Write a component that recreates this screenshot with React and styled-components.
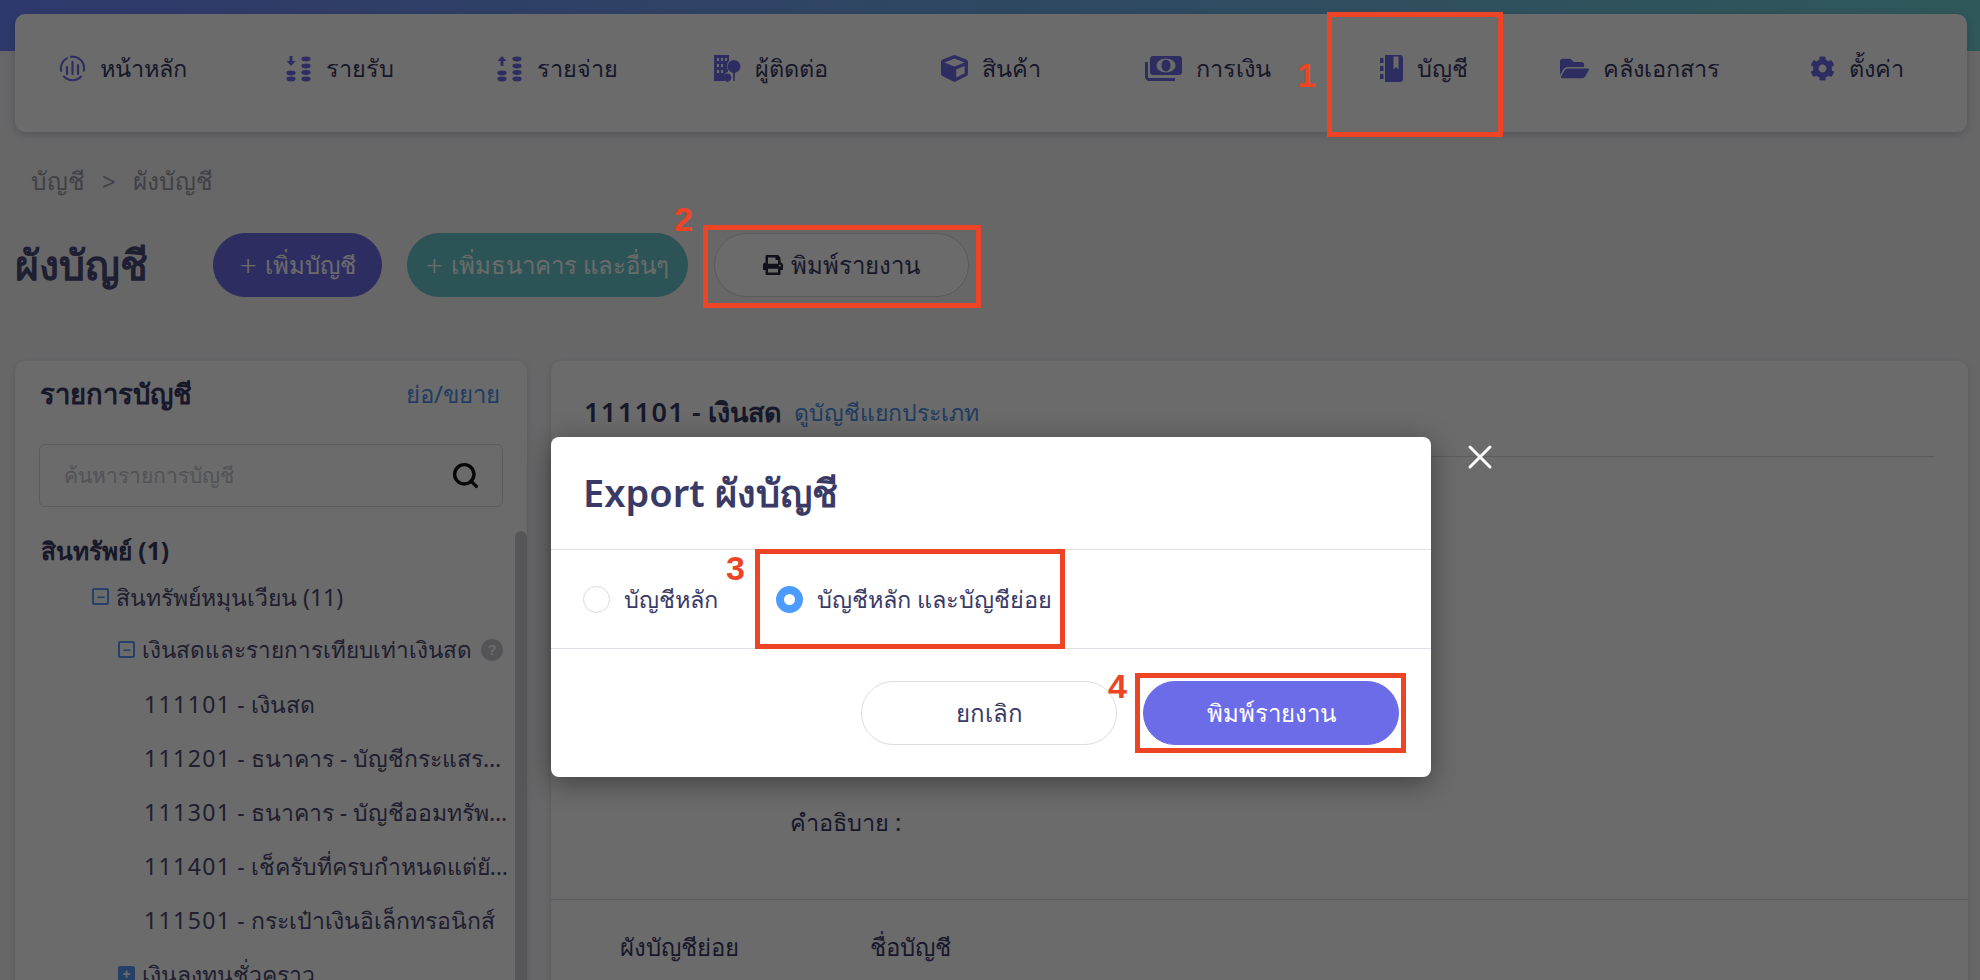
import React from 'react';
import styled, { createGlobalStyle } from 'styled-components';
import { FaCube, FaFolderOpen, FaCog, FaPrint } from 'react-icons/fa';
import { Search, X } from 'lucide-react';

const GlobalStyle = createGlobalStyle`
  html, body {
    margin: 0;
    height: 100%;
    overflow: hidden;
    background: #f5f5f8;
    color: #3a3a66;
    font-family: "Noto Sans", "Open Sans", "Liberation Sans", sans-serif;
  }
  * { box-sizing: border-box; }
`;

const Page = styled.div`
  position: relative;
  width: 1980px;
  height: 980px;
  overflow: hidden;
`;

const Header = styled.header`
  padding: 14px 13px 0 15px;
  background: linear-gradient(90deg, #7186ff, #70d2d6) no-repeat;
  background-size: 100% 51px;
`;

const Nav = styled.nav`
  display: grid;
  grid-template-columns: 227px 211px 217px 227px 204px 235px 180px 250px 1fr;
  height: 118px;
  padding: 42px 0 0 44px;
  background: #fff;
  border-radius: 10px;
  box-shadow: 0 2px 8px rgba(60, 60, 100, 0.25);
`;

const NavItem = styled.a`
  display: flex;
  align-items: center;
  gap: 14px;
  height: 25px;
  font-size: 23.5px;
  color: #3a3a66;
  white-space: nowrap;
  svg { flex: none; color: #6c6ce8; }
`;

const Main = styled.main`
  padding: 0 12px 0 15px;
`;

const Crumbs = styled.div`
  display: flex;
  gap: 17px;
  align-items: center;
  height: 30px;
  margin: 34px 0 0 16px;
  font-size: 24.5px;
  color: #9a9aa8;
`;

const TitleRow = styled.div`
  display: flex;
  align-items: center;
  height: 64px;
  margin-top: 37px;
`;

const PageTitle = styled.h1`
  width: 198px;
  margin: 0;
  font-size: 41px;
  font-weight: 700;
  color: #4a4a7a;
  white-space: nowrap;
`;

const HeadButton = styled.button`
  display: flex;
  align-items: center;
  justify-content: center;
  gap: 8px;
  width: ${(p) => p.$width}px;
  height: 64px;
  margin-right: ${(p) => p.$gap}px;
  border: 1px solid ${(p) => (p.$bg ? p.$bg : '#d5d5e2')};
  border-radius: 32px;
  background: ${(p) => p.$bg || '#fff'};
  color: ${(p) => (p.$bg ? '#fff' : '#3a3a66')};
  font: inherit;
  font-size: 24px;
  white-space: nowrap;
`;

const Plus = styled.span`
  font-size: 30px;
  font-weight: 300;
  line-height: 1;
`;

const Columns = styled.div`
  display: grid;
  grid-template-columns: 512px 1fr;
  gap: 24px;
  margin-top: 64px;
`;

const Panel = styled.section`
  height: 640px;
  overflow: hidden;
  background: #fff;
  border-radius: 10px;
  box-shadow: 0 1px 6px rgba(60, 60, 100, 0.15);
`;

const SideHead = styled.div`
  display: flex;
  justify-content: space-between;
  align-items: center;
  height: 66px;
  padding: 0 27px 0 25px;
`;

const SideTitle = styled.h2`
  margin: 0;
  font-size: 27.5px;
  font-weight: 700;
  color: #3a3a66;
`;

const BlueLink = styled.a`
  font-size: ${(p) => p.$size}px;
  color: #4c8fe8;
  white-space: nowrap;
`;

const SearchBox = styled.div`
  display: flex;
  align-items: center;
  justify-content: space-between;
  height: 63px;
  margin: 17px 24px 0;
  padding: 0 22px 0 24px;
  border: 1px solid #d8d8e4;
  border-radius: 6px;
  font-size: 21px;
  color: #c4c4cf;
  svg { color: #111; }
`;

const TreeWrap = styled.div`
  display: flex;
  margin-top: 24px;
`;

const Tree = styled.div`
  flex: 1;
  min-width: 0;
  padding: 0 4px 0 26px;
`;

const ScrollThumb = styled.div`
  flex: none;
  width: 12px;
  height: 480px;
  background: #cfcfd6;
  border-radius: 6px 6px 0 0;
`;

const GroupTitle = styled.div`
  height: 40px;
  line-height: 40px;
  font-size: 24.5px;
  font-weight: 700;
  color: #3a3a66;
`;

const TreeRow = styled.div`
  display: flex;
  align-items: center;
  gap: 7px;
  height: ${(p) => p.$h || 54}px;
  padding-left: ${(p) => p.$indent}px;
  font-size: ${(p) => p.$size || 23}px;
  line-height: 40px;
  color: #4a4a72;
  white-space: nowrap;
`;

const RowText = styled.span`
  min-width: 0;
  overflow: hidden;
  text-overflow: ellipsis;
`;

const Code = styled.span`
  letter-spacing: 1.4px;
`;

const Toggle = styled.span`
  display: flex;
  flex: none;
  align-items: center;
  justify-content: center;
  width: 17px;
  height: 17px;
  border: 2px solid #5a9cf5;
  border-radius: 2px;
  background: ${(p) => (p.$filled ? '#5a9cf5' : 'transparent')};
  color: ${(p) => (p.$filled ? '#fff' : '#5a9cf5')};
  font: 700 14px/1 "Liberation Sans", sans-serif;
`;

const Help = styled.span`
  flex: none;
  width: 22px;
  height: 22px;
  margin: 0 8px 0 auto;
  border-radius: 50%;
  background: #c9c9d0;
  color: #fff;
  text-align: center;
  font: 700 15px/22px "Liberation Sans", sans-serif;
`;

const DetailHead = styled.div`
  display: flex;
  align-items: center;
  gap: 12px;
  height: 96px;
  margin: 0 33px;
  padding-top: 8px;
  border-bottom: 1px solid #d8d8e4;
`;

const DetailName = styled.span`
  font-size: 27px;
  font-weight: 600;
  color: #3a3a66;
`;

const Description = styled.div`
  height: 443px;
  padding: 350px 0 0 239px;
  border-bottom: 1px solid #d8d8e4;
  font-size: 23.5px;
  line-height: 30px;
  color: #3a3a66;
`;

const TableHead = styled.div`
  display: grid;
  grid-template-columns: 250px 1fr;
  padding: 32px 0 0 69px;
  font-size: 24px;
  line-height: 30px;
  color: #3a3a66;
`;

const Overlay = styled.div`
  position: absolute;
  inset: 0;
  background: rgba(0, 0, 0, 0.58);
`;

const Modal = styled.div`
  position: absolute;
  left: 551px;
  top: 437px;
  width: 880px;
  height: 340px;
  background: #fff;
  border-radius: 8px;
  box-shadow: 0 6px 28px rgba(0, 0, 0, 0.4);
`;

const CloseButton = styled.span`
  position: absolute;
  left: 909px;
  top: 0;
  display: flex;
  color: #fff;
`;

const ModalTitle = styled.h3`
  display: flex;
  align-items: center;
  height: 112px;
  margin: 0;
  padding-left: 32px;
  font-size: 38px;
  font-weight: 600;
  color: #3a3a66;
`;

const Options = styled.div`
  display: flex;
  align-items: center;
  gap: 166px;
  height: 100px;
  padding-left: 32px;
  border-top: 1px solid #dfdfea;
  border-bottom: 1px solid #dfdfea;
`;

const Option = styled.label`
  display: flex;
  align-items: center;
  gap: 14px;
  width: ${(p) => p.$width}px;
  font-size: 23.5px;
  color: #3a3a66;
  white-space: nowrap;
`;

const Radio = styled.span`
  flex: none;
  width: 27px;
  height: 27px;
  border-radius: 50%;
  border: ${(p) => (p.$on ? '8px solid #4c9bff' : '1px solid #d8d8e4')};
  background: #fff;
`;

const ModalFooter = styled.div`
  display: flex;
  justify-content: flex-end;
  gap: 26px;
  padding: 32px 32px 0 0;
`;

const ModalButton = styled.button`
  width: 256px;
  height: 64px;
  border: 1px solid ${(p) => (p.$primary ? '#6c6ce8' : '#dcdce8')};
  border-radius: 32px;
  background: ${(p) => (p.$primary ? '#6c6ce8' : '#fff')};
  color: ${(p) => (p.$primary ? '#fff' : '#3a3a66')};
  font: inherit;
  font-size: 24px;
`;

// red marks drawn on top of the screenshot
const MarkBox = styled.div`
  position: absolute;
  left: ${(p) => p.$x}px;
  top: ${(p) => p.$y}px;
  width: ${(p) => p.$w}px;
  height: ${(p) => p.$h}px;
  border: 5px solid #ee4426;
`;

const MarkNum = styled.span`
  position: absolute;
  left: ${(p) => p.$x}px;
  top: ${(p) => p.$y}px;
  color: #ee4426;
  font: 700 34px/34px "Liberation Sans", sans-serif;
`;

const GaugeIcon = () => (
  <svg width="27" height="27" viewBox="0 0 27 27" fill="none" stroke="currentColor">
    <path d="M2.2 16A11.5 11.5 0 0 1 8 3.2M12 1.8a11.5 11.5 0 0 1 12.8 14M22 21.5a11.5 11.5 0 0 1-17 0" strokeWidth="2" strokeLinecap="round" />
    <path d="M8 12v7M13.500 7v12M19 10v9" strokeWidth="2.2" strokeLinecap="round" />
  </svg>
);

const Coin = ({ cx, cy }) => <ellipse cx={cx} cy={cy} rx="4.6" ry="2.4" fill="currentColor" />;

const CoinsIcon = ({ up }) => (
  <svg width="26" height="26" viewBox="0 0 26 26">
    <path d={up ? 'M5 0l4.5 5H6.500v5h-3V5H.5z' : 'M3.500 0h3v5h3L5 10 .5 5h3z'} fill="currentColor" />
    <Coin cx="5" cy="17" />
    <Coin cx="5" cy="23" />
    <Coin cx="20" cy="3" />
    <Coin cx="20" cy="10" />
    <Coin cx="20" cy="16.500" />
    <Coin cx="20" cy="23" />
  </svg>
);

const ContactIcon = () => (
  <svg width="27" height="27" viewBox="0 0 27 27" fill="currentColor">
    <path fillRule="evenodd" d="M0 0h15v6a7 7 0 0 0-1 9v2a5 5 0 0 0-4 6l1 3H0zM3 3v3h2V3zM7 3v3h2V3zM11 3v3h2V3zM3 9v3h2V9zM7 9v3h2V9zM3 15v3h2v-3zM7 15v3h2v-3z" />
    <path d="M20 5c3.500 0 6.500 3 6.500 6.500 0 3.500-3 5.500-5.500 6.500l-.3 8h-1.400l-.3-8c-2.500-1-5.500-3-5.500-6.500C13.500 8 16.500 5 20 5z" />
    <path d="M13.500 18.500a4 4 0 0 1 3 6.500l-2.500 2h-1l-2.500-2a4 4 0 0 1 3-6.500z" />
  </svg>
);

const MoneyIcon = () => (
  <svg width="37" height="25" viewBox="0 0 37 25">
    <path d="M1.500 6v15a2.500 2.500 0 0 0 2.500 2.500h26" fill="none" stroke="currentColor" strokeWidth="3" />
    <path fillRule="evenodd" fill="currentColor" d="M8 0h26a3 3 0 0 1 3 3v13a3 3 0 0 1-3 3H8a3 3 0 0 1-3-3V3a3 3 0 0 1 3-3zm13 2.500c-5 0-9.500 3-9.500 7s4.500 7 9.500 7 9.500-3 9.500-7-4.500-7-9.500-7z" />
    <ellipse cx="21" cy="9.500" rx="4.500" ry="6" fill="currentColor" />
  </svg>
);

const BookIcon = () => (
  <svg width="23" height="27" viewBox="0 0 23 27" fill="currentColor">
    <path fillRule="evenodd" d="M5 0h15a3 3 0 0 1 3 3v21a3 3 0 0 1-3 3H5zM13.500 1.500v13l2.500-2.500 2.500 2.500v-13z" />
    <path d="M0 3h3.500v5H0zM0 11h3.500v5H0zM0 19h3.500v5H0z" />
  </svg>
);

const navItems = [
  { label: 'หน้าหลัก', icon: <GaugeIcon /> },
  { label: 'รายรับ', icon: <CoinsIcon /> },
  { label: 'รายจ่าย', icon: <CoinsIcon up /> },
  { label: 'ผู้ติดต่อ', icon: <ContactIcon /> },
  { label: 'สินค้า', icon: <FaCube size={27} /> },
  { label: 'การเงิน', icon: <MoneyIcon /> },
  { label: 'บัญชี', icon: <BookIcon /> },
  { label: 'คลังเอกสาร', icon: <FaFolderOpen size={29} /> },
  { label: 'ตั้งค่า', icon: <FaCog size={25} /> },
];

const accounts = [
  { code: '111101', name: ' - เงินสด' },
  { code: '111201', name: ' - ธนาคาร - บัญชีกระแสรายวัน' },
  { code: '111301', name: ' - ธนาคาร - บัญชีออมทรัพย์ประจำ' },
  { code: '111401', name: ' - เช็ครับที่ครบกำหนดแต่ยังไม่นำฝาก' },
  { code: '111501', name: ' - กระเป๋าเงินอิเล็กทรอนิกส์' },
];

export default function App() {
  return (
    <Page>
      <GlobalStyle />
      <Header>
        <Nav>
          {navItems.map((item) => (
            <NavItem key={item.label}>
              {item.icon}
              {item.label}
            </NavItem>
          ))}
        </Nav>
      </Header>
      <Main>
        <Crumbs>
          <span>บัญชี</span>
          <span>&gt;</span>
          <span>ผังบัญชี</span>
        </Crumbs>
        <TitleRow>
          <PageTitle>ผังบัญชี</PageTitle>
          <HeadButton $width={169} $gap={25} $bg="#6c6ce8"><Plus>+</Plus> เพิ่มบัญชี</HeadButton>
          <HeadButton $width={281} $gap={26} $bg="#69c6cd"><Plus>+</Plus> เพิ่มธนาคาร และอื่นๆ</HeadButton>
          <HeadButton $width={255} $gap={0}>
            <FaPrint size={20} color="#2a2a40" />
            พิมพ์รายงาน
          </HeadButton>
        </TitleRow>
        <Columns>
          <Panel>
            <SideHead>
              <SideTitle>รายการบัญชี</SideTitle>
              <BlueLink $size={24}>ย่อ/ขยาย</BlueLink>
            </SideHead>
            <SearchBox>
              ค้นหารายการบัญชี
              <Search size={29} strokeWidth={2.8} />
            </SearchBox>
            <TreeWrap>
              <Tree>
                <GroupTitle>สินทรัพย์ (1)</GroupTitle>
                <TreeRow $indent={51} $h={51}>
                  <Toggle>−</Toggle>
                  <RowText>สินทรัพย์หมุนเวียน (11)</RowText>
                </TreeRow>
                <TreeRow $indent={77} $h={55} $size={22.5}>
                  <Toggle>−</Toggle>
                  <RowText>เงินสดและรายการเทียบเท่าเงินสด</RowText>
                  <Help>?</Help>
                </TreeRow>
                {accounts.map((item) => (
                  <TreeRow key={item.code} $indent={103}>
                    <RowText><Code>{item.code}</Code>{item.name}</RowText>
                  </TreeRow>
                ))}
                <TreeRow $indent={77}>
                  <Toggle $filled>+</Toggle>
                  <RowText>เงินลงทุนชั่วคราว</RowText>
                </TreeRow>
              </Tree>
              <ScrollThumb />
            </TreeWrap>
          </Panel>
          <Panel>
            <DetailHead>
              <DetailName><Code>111101</Code> - เงินสด</DetailName>
              <BlueLink $size={23}>ดูบัญชีแยกประเภท</BlueLink>
            </DetailHead>
            <Description>คำอธิบาย :</Description>
            <TableHead>
              <span>ผังบัญชีย่อย</span>
              <span>ชื่อบัญชี</span>
            </TableHead>
          </Panel>
        </Columns>
      </Main>
      <Overlay />
      <Modal>
        <CloseButton>
          <X size={40} strokeWidth={1.8} />
        </CloseButton>
        <ModalTitle>Export ผังบัญชี</ModalTitle>
        <Options>
          <Option $width={27}>
            <Radio />
            บัญชีหลัก
          </Option>
          <Option $width={300}>
            <Radio $on />
            บัญชีหลัก และบัญชีย่อย
          </Option>
        </Options>
        <ModalFooter>
          <ModalButton>ยกเลิก</ModalButton>
          <ModalButton $primary>พิมพ์รายงาน</ModalButton>
        </ModalFooter>
      </Modal>
      <MarkBox $x={1327} $y={12} $w={176} $h={125} />
      <MarkNum $x={1297} $y={58}>1</MarkNum>
      <MarkBox $x={703} $y={225} $w={278} $h={83} />
      <MarkNum $x={674} $y={202}>2</MarkNum>
      <MarkBox $x={755} $y={549} $w={310} $h={100} />
      <MarkNum $x={726} $y={551}>3</MarkNum>
      <MarkBox $x={1135} $y={673} $w={271} $h={80} />
      <MarkNum $x={1108} $y={669}>4</MarkNum>
    </Page>
  );
}
